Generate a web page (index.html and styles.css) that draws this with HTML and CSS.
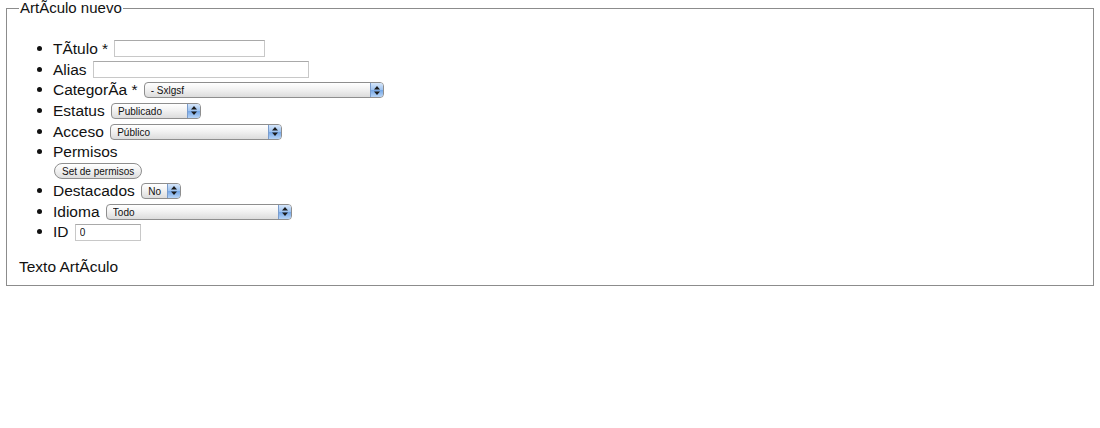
FILE: index.html
```html
<!DOCTYPE html>
<html lang="es">
<head>
  <meta charset="UTF-8" />
  <title>ArtÃculo nuevo</title>
  <link rel="stylesheet" href="styles.css">
</head>
<body>
  <form id="articleForm">
    <fieldset>
      <legend>ArtÃculo nuevo</legend>
      <ul class="fields">
        <li>
          <label for="title">TÃtulo *</label>
          <input type="text" id="title" class="txt w-title">
        </li>
        <li>
          <label for="alias">Alias</label>
          <input type="text" id="alias" class="txt w-alias">
        </li>
        <li>
          <label for="catid">CategorÃa *</label>
          <span class="select w-cat"><select id="catid"><option>- Sxlgsf</option></select><span class="arrow"><svg width="6" height="9" viewBox="0 0 6 9"><path d="M0 3.5L3 0L6 3.5Z M0 5.5L3 9L6 5.5Z" fill="#1a1a1a"/></svg></span></span>
        </li>
        <li>
          <label for="state">Estatus</label>
          <span class="select w-state"><select id="state"><option>Publicado</option></select><span class="arrow"><svg width="6" height="9" viewBox="0 0 6 9"><path d="M0 3.5L3 0L6 3.5Z M0 5.5L3 9L6 5.5Z" fill="#1a1a1a"/></svg></span></span>
        </li>
        <li>
          <label for="access">Acceso</label>
          <span class="select w-access"><select id="access"><option>Público</option></select><span class="arrow"><svg width="6" height="9" viewBox="0 0 6 9"><path d="M0 3.5L3 0L6 3.5Z M0 5.5L3 9L6 5.5Z" fill="#1a1a1a"/></svg></span></span>
        </li>
        <li class="perm">
          <label>Permisos</label>
          <button type="button" class="pill">Set de permisos</button>
        </li>
        <li>
          <label for="featured">Destacados</label>
          <span class="select w-feat"><select id="featured"><option>No</option></select><span class="arrow"><svg width="6" height="9" viewBox="0 0 6 9"><path d="M0 3.5L3 0L6 3.5Z M0 5.5L3 9L6 5.5Z" fill="#1a1a1a"/></svg></span></span>
        </li>
        <li>
          <label for="language">Idioma</label>
          <span class="select w-lang"><select id="language"><option>Todo</option></select><span class="arrow"><svg width="6" height="9" viewBox="0 0 6 9"><path d="M0 3.5L3 0L6 3.5Z M0 5.5L3 9L6 5.5Z" fill="#1a1a1a"/></svg></span></span>
        </li>
        <li>
          <label for="id">ID</label>
          <input type="text" id="id" class="txt w-id" value="0">
        </li>
      </ul>
      <p class="body-label">Texto ArtÃculo</p>
    </fieldset>
  </form>
</body>
</html>
```

FILE: styles.css
```css
* {
  box-sizing: border-box;
}

body {
  margin: 0 6px;
  background: #fff;
  color: #111;
  font-family: "Liberation Sans", Arial, sans-serif;
  font-size: 15.5px;
}

fieldset {
  margin: 0;
  padding: 0 12px 9px;
  border: 1px solid #8c8c8c;
}

legend {
  padding: 0 1px;
  font-size: 15px;
  line-height: 16px;
}

.fields {
  margin: 22px 0 0;
  padding-left: 34px;
  list-style: disc;
}

.fields li {
  height: 20.7px;
  line-height: 20.7px;
}

.fields label {
  vertical-align: middle;
}

.txt {
  vertical-align: middle;
  height: 17px;
  margin: 0 0 0 2px;
  padding: 0 4px;
  border: 1px solid #c8c8c8;
  border-top-color: #a9a9a9;
  background: #fff;
  font-family: "Liberation Sans", Arial, sans-serif;
  font-size: 10px;
  color: #111;
}

.w-title { width: 151px; }
.w-alias { width: 216px; }
.w-id { width: 66px; }

.select {
  position: relative;
  display: inline-block;
  vertical-align: middle;
  height: 16px;
  margin-left: 2px;
}

.select select {
  appearance: none;
  -webkit-appearance: none;
  width: 100%;
  height: 16px;
  margin: 0;
  padding: 1px 16px 0 6px;
  border: 1px solid #8e8e8e;
  border-radius: 4px;
  background: linear-gradient(#ffffff, #f2f2f2 45%, #dcdcdc);
  font-family: "Liberation Sans", Arial, sans-serif;
  font-size: 10px;
  line-height: 14px;
  color: #111;
  display: block;
}

.select .arrow {
  position: absolute;
  top: 1px;
  right: 1px;
  width: 13px;
  height: 14px;
  border-left: 1px solid #7a9ccc;
  border-radius: 0 3px 3px 0;
  background: linear-gradient(#d6e6fa, #9cc2f0 50%, #74a6e6 51%, #b7d4f6);
  display: flex;
  align-items: center;
  justify-content: center;
  pointer-events: none;
}

.w-cat { width: 240px; }
.w-state { width: 90px; }
.w-access { width: 172px; }
.w-feat { width: 40px; }
.w-lang { width: 186px; }

.fields li.perm {
  height: 38.5px;
}

.pill {
  display: block;
  height: 16px;
  margin: 0 0 0 1px;
  padding: 1px 7px 0;
  border: 1px solid #8e8e8e;
  border-radius: 8px;
  background: linear-gradient(#ffffff, #f0f0f0 50%, #dedede);
  font-family: "Liberation Sans", Arial, sans-serif;
  font-size: 10px;
  line-height: 13px;
  color: #111;
}

.body-label {
  margin: 15px 0 0;
  line-height: 19px;
}
```
